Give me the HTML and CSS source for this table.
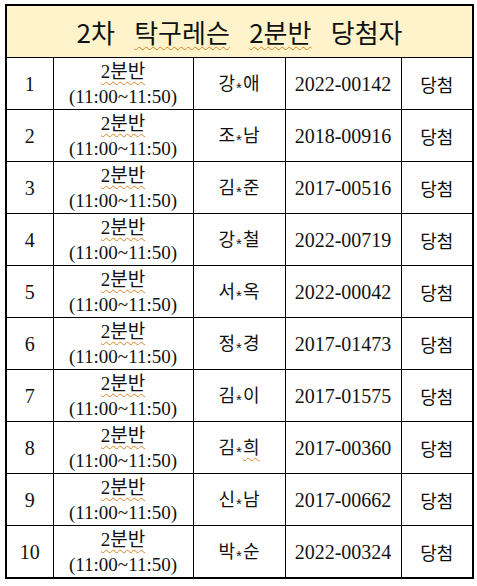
FILE: index.html
```html
<!DOCTYPE html>
<html lang="ko">
<head>
<meta charset="utf-8">
<link rel="stylesheet" href="styles.css">
</head>
<body>
<table class="winners">
  <colgroup>
    <col class="c-no"><col class="c-class"><col class="c-name"><col class="c-id"><col class="c-res">
  </colgroup>
  <thead>
    <tr><th colspan="5" class="title">2차 <span class="spell">탁구레슨</span> <span class="spell">2분반</span> 당첨자</th></tr>
  </thead>
  <tbody>
    <tr><td class="no">1</td><td class="cls"><span class="ln"><span class="spell">2분반</span></span><span class="ln">(11:00~11:50)</span></td><td class="kr">강<span class="ast">*</span>애</td><td class="id">2022-00142</td><td class="kr">당첨</td></tr>
    <tr><td class="no">2</td><td class="cls"><span class="ln"><span class="spell">2분반</span></span><span class="ln">(11:00~11:50)</span></td><td class="kr">조<span class="ast">*</span>남</td><td class="id">2018-00916</td><td class="kr">당첨</td></tr>
    <tr><td class="no">3</td><td class="cls"><span class="ln"><span class="spell">2분반</span></span><span class="ln">(11:00~11:50)</span></td><td class="kr">김<span class="ast">*</span>준</td><td class="id">2017-00516</td><td class="kr">당첨</td></tr>
    <tr><td class="no">4</td><td class="cls"><span class="ln"><span class="spell">2분반</span></span><span class="ln">(11:00~11:50)</span></td><td class="kr">강<span class="ast">*</span>철</td><td class="id">2022-00719</td><td class="kr">당첨</td></tr>
    <tr><td class="no">5</td><td class="cls"><span class="ln"><span class="spell">2분반</span></span><span class="ln">(11:00~11:50)</span></td><td class="kr">서<span class="ast">*</span>옥</td><td class="id">2022-00042</td><td class="kr">당첨</td></tr>
    <tr><td class="no">6</td><td class="cls"><span class="ln"><span class="spell">2분반</span></span><span class="ln">(11:00~11:50)</span></td><td class="kr">정<span class="ast">*</span>경</td><td class="id">2017-01473</td><td class="kr">당첨</td></tr>
    <tr><td class="no">7</td><td class="cls"><span class="ln"><span class="spell">2분반</span></span><span class="ln">(11:00~11:50)</span></td><td class="kr">김<span class="ast">*</span>이</td><td class="id">2017-01575</td><td class="kr">당첨</td></tr>
    <tr><td class="no">8</td><td class="cls"><span class="ln"><span class="spell">2분반</span></span><span class="ln">(11:00~11:50)</span></td><td class="kr">김<span class="ast">*</span><span class="spell">희</span></td><td class="id">2017-00360</td><td class="kr">당첨</td></tr>
    <tr><td class="no">9</td><td class="cls"><span class="ln"><span class="spell">2분반</span></span><span class="ln">(11:00~11:50)</span></td><td class="kr">신<span class="ast">*</span>남</td><td class="id">2017-00662</td><td class="kr">당첨</td></tr>
    <tr><td class="no">10</td><td class="cls"><span class="ln"><span class="spell">2분반</span></span><span class="ln">(11:00~11:50)</span></td><td class="kr">박<span class="ast">*</span>순</td><td class="id">2022-00324</td><td class="kr">당첨</td></tr>
  </tbody>
</table>
</body>
</html>
```
FILE: styles.css
```css
html, body {
  margin: 0;
  padding: 0;
  background: #ffffff;
}
body {
  padding: 4px 0 0 5px;
}
.winners {
  border-collapse: collapse;
  width: 467px;
  table-layout: fixed;
  border: 2px solid #000;
  color: #111;
  font-family: "Liberation Serif", "Noto Sans CJK KR", serif;
  font-size: 19px;
}
.c-no { width: 47px; }
.c-class { width: 140px; }
.c-name { width: 92px; }
.c-id { width: 116px; }
.c-res { width: 72px; }
.winners th, .winners td {
  border: 1px solid #000;
  padding: 0;
  text-align: center;
  vertical-align: middle;
  height: 51px;
  overflow: hidden;
}
.title {
  background: #fff3cb;
  font-family: "Noto Sans CJK KR", "Liberation Sans", sans-serif;
  font-weight: normal;
  font-size: 26px;
  word-spacing: 12px;
  line-height: 30px;
}
.ln {
  display: block;
  height: 25px;
  line-height: 25px;
}
.kr {
  font-family: "Noto Sans CJK KR", sans-serif;
  font-size: 18px;
  line-height: 24px;
}
.id {
  font-size: 20px;
  line-height: 24px;
}
.no {
  font-size: 20px;
  line-height: 24px;
}
.ast {
  font-family: "Liberation Sans", sans-serif;
  font-size: 15px;
  position: relative;
  top: 3px;
  margin: 0 1px;
}
.spell {
  text-decoration: underline wavy #d9822b;
  text-decoration-thickness: 1px;
  text-underline-offset: 3px;
}
```
